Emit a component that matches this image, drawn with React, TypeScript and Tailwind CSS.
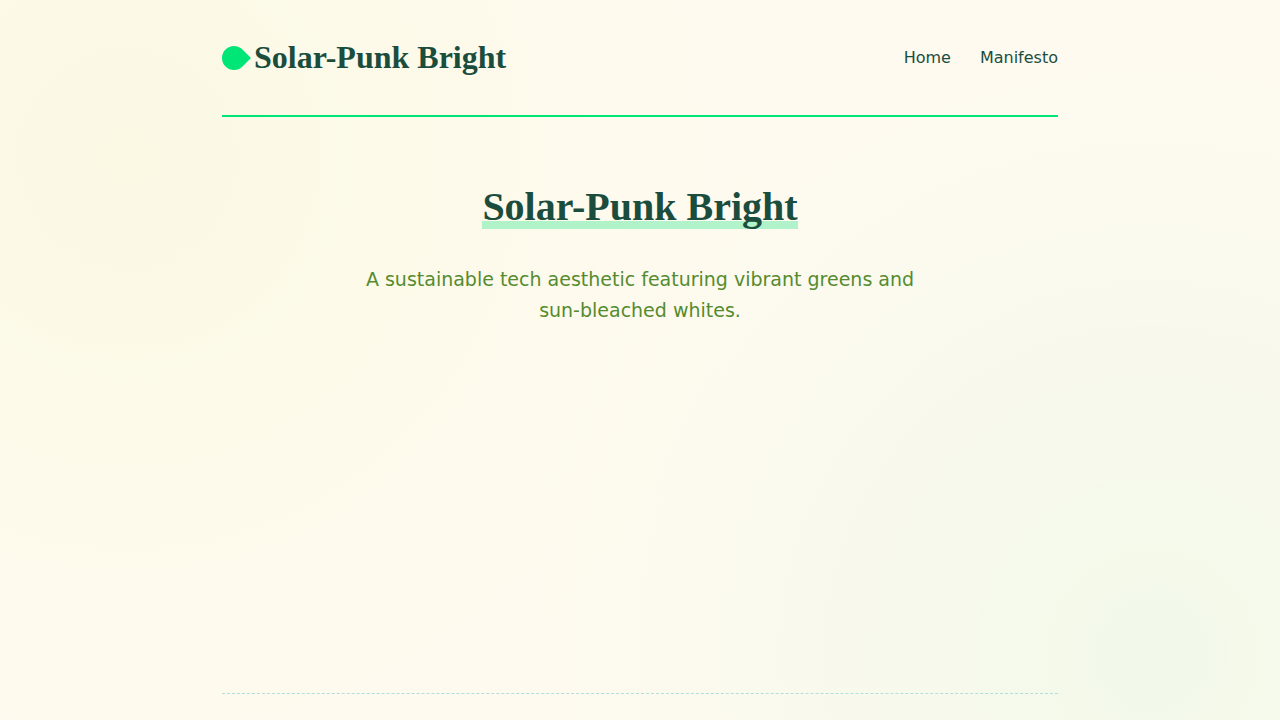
import React from 'react';

interface NavItem {
  label: string;
  href: string;
}

const navItems: NavItem[] = [
  { label: 'Home', href: '#home' },
  { label: 'Manifesto', href: '#manifesto' },
];

const Header: React.FC = () => (
  <header className="flex items-center justify-between border-b-2 border-[#00e676] pb-8">
    <a
      href="#home"
      className="flex items-center gap-2 font-['Liberation_Serif',serif] text-[32px] leading-[51px] font-bold text-[#1b4d3e]"
    >
      {/* Leaf */}
      <span className="size-6 rotate-45 rounded-full rounded-tr-none bg-[#00e676]" />
      Solar-Punk Bright
    </a>

    <nav className="flex gap-[29px]">
      {navItems.map((item) => (
        <a key={item.label} href={item.href} className="text-base text-[#1b4d3e] hover:text-[#00e676]">
          {item.label}
        </a>
      ))}
    </nav>
  </header>
);

const Hero: React.FC = () => (
  <section className="flex flex-col items-center pt-16 text-center">
    <h1 className="relative isolate font-['Liberation_Serif',serif] text-[40px] leading-[52px] font-bold text-[#1b4d3e]">
      Solar-Punk Bright
      {/* Highlighter stroke behind the title */}
      <span className="absolute inset-x-0 bottom-1 -z-10 h-2 bg-[#00e676]/30" />
    </h1>
    <p className="mt-[31px] max-w-[580px] text-[19px] leading-[31px] text-[#558b2f]">
      A sustainable tech aesthetic featuring vibrant greens and sun-bleached whites.
    </p>
  </section>
);

const App: React.FC = () => {
  return (
    <div className="min-h-screen bg-[#fffaf0] bg-[radial-gradient(circle_at_10%_22%,rgba(174,234,0,0.05)_0%,transparent_51%),radial-gradient(circle_at_90%_91%,rgba(0,230,118,0.05)_0%,transparent_50%)] font-['DejaVu_Sans',sans-serif]">
      <div className="mx-auto flex min-h-screen max-w-[900px] flex-col px-8 pt-8">
        <Header />
        <main className="flex-1">
          <Hero />
        </main>
        <footer className="border-t border-dashed border-[#b2dfdb] pt-[26px]" />
      </div>
    </div>
  );
};

export default App;
